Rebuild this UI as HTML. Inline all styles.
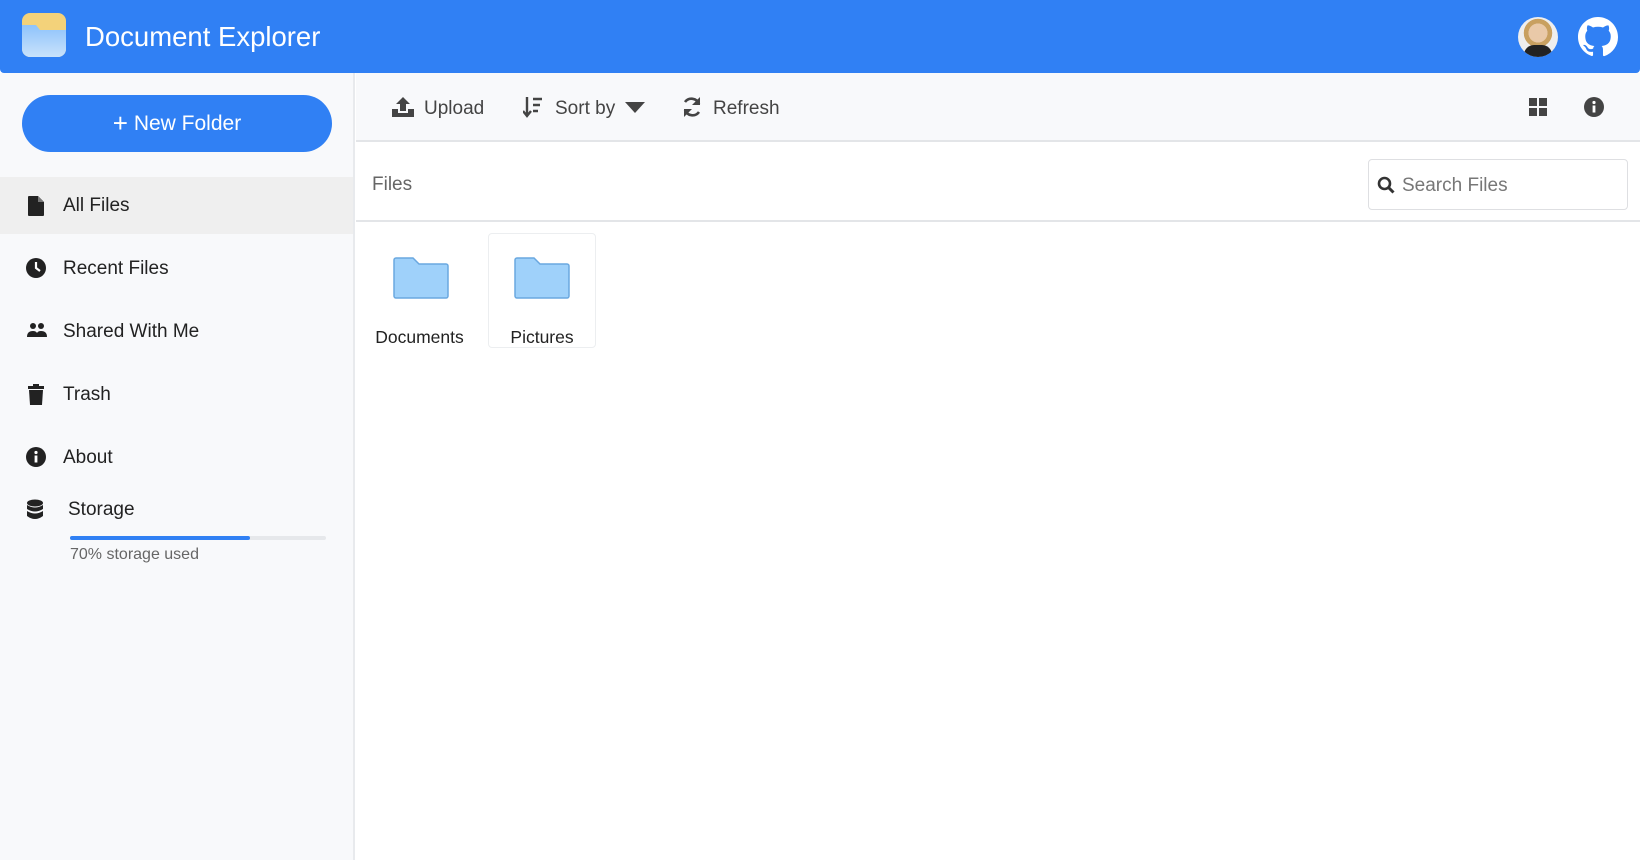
<!DOCTYPE html>
<html><head><meta charset="utf-8"><style>
*{box-sizing:border-box;margin:0;padding:0}
body{width:1640px;height:860px;overflow:hidden;background:#fff;font-family:"Liberation Sans",Arial,sans-serif;position:relative;color:#222}
.hdr{position:absolute;left:0;top:0;width:1640px;height:73px;background:#3080f4;border-radius:0 0 4px 4px}
.abs{position:absolute}
.side{position:absolute;left:0;top:73px;width:355px;height:787px;background:#f8f9fb;border-right:2px solid #e8eaed}
.btn{position:absolute;left:22px;top:95px;width:310px;height:57px;border-radius:29px;background:#3080f4;color:#fff;font-size:21px;text-align:center;line-height:57px}
.item{position:absolute;left:0;width:353px;height:57px;font-size:19px;line-height:57px}
.item span{position:absolute;left:63px}
.item svg{position:absolute;left:26px;top:18px}
.tb{position:absolute;left:356px;top:73px;width:1284px;height:69px;background:#f8f9fb;border-bottom:2px solid #e3e5e8;font-size:19px;color:#444}
.fh{position:absolute;left:356px;top:142px;width:1284px;height:80px;border-bottom:2px solid #e3e5e8}
.card{position:absolute;top:233px;height:115px;border-radius:4px;text-align:center;font-size:17.5px}
</style></head><body>
<div class="hdr">
 <svg class="abs" style="left:22px;top:13px" width="44" height="44" viewBox="0 0 44 44"><defs><linearGradient id="g" x1="0" y1="0" x2="0" y2="1"><stop offset="0" stop-color="#8ec3fb"/><stop offset="1" stop-color="#c9e2fb"/></linearGradient></defs><rect width="44" height="44" rx="8" fill="#f3d27a"/><path d="M0 12h14l4 5h26v19a8 8 0 0 1-8 8H8a8 8 0 0 1-8-8z" fill="url(#g)"/></svg>
 <div class="abs" style="left:85px;top:21px;color:#fff;font-size:27.5px">Document Explorer</div>
 <div class="abs" style="left:1518px;top:17px;width:40px;height:40px;border-radius:50%;background:radial-gradient(circle at 50% 40%,#e9c9a8 0 30%,#c8a060 31% 45%,#eee 46%);overflow:hidden"><div style="position:absolute;left:6px;top:28px;width:28px;height:14px;background:#222;border-radius:10px 10px 0 0"></div></div>
 <svg class="abs" style="left:1578px;top:17px" width="40" height="40" viewBox="0 0 16 16"><path fill="#fff" d="M8 0C3.58 0 0 3.58 0 8c0 3.540 2.29 6.530 5.470 7.590.4.07.55-.17.55-.38v-1.330c-2.230.48-2.700-1.070-2.700-1.070-.36-.92-.89-1.170-.89-1.170-.73-.5.06-.49.06-.49.8.06 1.230.83 1.230.83.72 1.230 1.870.87 2.330.67.07-.52.28-.87.5-1.070-1.780-.2-3.650-.89-3.650-3.950 0-.87.31-1.590.82-2.150-.08-.2-.36-1.020.08-2.120 0 0 .67-.21 2.200.82a7.600 7.600 0 0 1 4 0c1.530-1.040 2.200-.82 2.200-.82.44 1.100.16 1.920.08 2.120.51.56.82 1.270.82 2.150 0 3.070-1.870 3.750-3.650 3.950.29.25.54.73.54 1.480v2.200c0 .21.15.46.55.38A8.010 8.010 0 0 0 16 8c0-4.420-3.580-8-8-8z"/></svg>
</div>
<div class="side">
 <div class="btn"style="top:22px"><b style="font-weight:normal;font-size:26px;vertical-align:-2px">+</b> New Folder</div>
 <div class="item" style="top:104px;background:#efefef"><svg width="20" height="22" viewBox="0 0 20 22"><path d="M3 1h9l6 6v13a1 1 0 0 1-1 1H3a1 1 0 0 1-1-1V2a1 1 0 0 1 1-1z" fill="#222"/><path d="M12 1v6h6" fill="#777"/></svg><span>All Files</span></div>
 <div class="item" style="top:167px"><svg width="20" height="20" viewBox="0 0 20 20"><circle cx="10" cy="10" r="10" fill="#222"/><path d="M10 4v6l4 3" stroke="#fff" stroke-width="2.2" fill="none"/></svg><span>Recent Files</span></div>
 <div class="item" style="top:230px"><svg width="22" height="20" viewBox="0 0 22 20"><circle cx="7" cy="5" r="3" fill="#222"/><circle cx="15" cy="5" r="3" fill="#222"/><path d="M1 16q0-6 6-6 3 0 4 2 1-2 4-2 6 0 6 6z" fill="#222"/></svg><span>Shared With Me</span></div>
 <div class="item" style="top:293px"><svg width="20" height="22" viewBox="0 0 20 22"><rect x="2" y="2" width="16" height="3" fill="#222"/><rect x="7" y="0" width="6" height="3" fill="#222"/><path d="M3 6h14l-1 15H4z" fill="#222"/></svg><span>Trash</span></div>
 <div class="item" style="top:356px"><svg width="20" height="20" viewBox="0 0 20 20"><circle cx="10" cy="10" r="10" fill="#222"/><circle cx="10" cy="5.5" r="1.6" fill="#fff"/><rect x="8.6" y="8.5" width="2.8" height="7" fill="#fff"/></svg><span>About</span></div>
 <div class="item" style="top:408px"><svg width="18" height="21" viewBox="0 0 18 21"><ellipse cx="9" cy="4" rx="8" ry="3.5" fill="#222"/><path d="M1 6q8 5 16 0v4q-8 5-16 0zM1 12q8 5 16 0v5q-8 6-16 0z" fill="#222"/></svg><span style="left:68px">Storage</span></div>
 <div class="abs" style="left:70px;top:463px;width:256px;height:4px;background:#e6e8eb;border-radius:2px"><div style="width:180px;height:4px;background:#3080f4;border-radius:2px"></div></div>
 <div class="abs" style="left:70px;top:473px;font-size:16px;color:#666">70% storage used</div>
</div>
<div class="tb">
 <svg class="abs" style="left:36px;top:24px" width="22" height="20" viewBox="0 0 22 20"><path d="M11 0l7 7h-4v7H8V7H4z" fill="#444"/><path d="M0 12h6v4h10v-4h6v8H0z" fill="#444"/></svg>
 <div class="abs" style="left:68px;top:25px">Upload</div>
 <svg class="abs" style="left:167px;top:23px" width="20" height="22" viewBox="0 0 20 22"><path d="M4 1v17M0 15l4 5 4-5" stroke="#444" stroke-width="2.4" fill="none"/><path d="M10 3h9M10 9h7M10 15h5" stroke="#444" stroke-width="2.4"/></svg>
 <div class="abs" style="left:199px;top:25px">Sort by</div>
 <svg class="abs" style="left:269px;top:29px" width="20" height="11" viewBox="0 0 20 11"><path d="M0 0h20l-10 11z" fill="#444"/></svg>
 <svg class="abs" style="left:325px;top:23px" width="22" height="22" viewBox="0 0 22 22"><path d="M18 8A8 8 0 0 0 4 6M4 14a8 8 0 0 0 14 2" stroke="#444" stroke-width="2.6" fill="none"/><path d="M19 1v8h-8zM3 21v-8h8z" fill="#444"/></svg>
 <div class="abs" style="left:357px;top:25px">Refresh</div>
 <svg class="abs" style="left:1173px;top:25px" width="18" height="18" viewBox="0 0 18 18"><rect width="8" height="8" fill="#444"/><rect x="10" width="8" height="8" fill="#444"/><rect y="10" width="8" height="8" fill="#444"/><rect x="10" y="10" width="8" height="8" fill="#444"/></svg>
 <svg class="abs" style="left:1228px;top:24px" width="20" height="20" viewBox="0 0 20 20"><circle cx="10" cy="10" r="10" fill="#444"/><circle cx="10" cy="5.5" r="1.6" fill="#fff"/><rect x="8.6" y="8.5" width="2.8" height="7" fill="#fff"/></svg>
</div>
<div class="fh">
 <div class="abs" style="left:16px;top:32px;font-size:19px;color:#666">Files</div>
 <div class="abs" style="left:1012px;top:17px;width:260px;height:51px;border:1px solid #dedfe2;border-radius:4px;background:#fff">
  <svg class="abs" style="left:8px;top:16px" width="18" height="18" viewBox="0 0 18 18"><circle cx="7.5" cy="7.5" r="5.5" stroke="#333" stroke-width="2.6" fill="none"/><path d="M11.5 11.5l5 5" stroke="#333" stroke-width="3"/></svg>
  <div class="abs" style="left:33px;top:15px;font-size:19px;color:#777">Search Files</div>
 </div>
</div>
<div class="card" style="left:370px;width:117px">
 <svg class="abs" style="left:23px;top:24px" width="56" height="42" viewBox="0 0 56 42"><path d="M1 3a2 2 0 0 1 2-2h17l6 6h27a2 2 0 0 1 2 2v30a2 2 0 0 1-2 2H3a2 2 0 0 1-2-2z" fill="#9fd1fa" stroke="#6aa8e0" stroke-width="1.5"/></svg>
 <div class="abs" style="left:-9px;width:117px;top:94px">Documents</div>
</div>
<div class="card" style="left:488px;width:108px;border:1px solid #eceef0">
 <svg class="abs" style="left:25px;top:23px" width="56" height="42" viewBox="0 0 56 42"><path d="M1 3a2 2 0 0 1 2-2h17l6 6h27a2 2 0 0 1 2 2v30a2 2 0 0 1-2 2H3a2 2 0 0 1-2-2z" fill="#9fd1fa" stroke="#6aa8e0" stroke-width="1.5"/></svg>
 <div class="abs" style="left:0;width:106px;top:93px">Pictures</div>
</div>
</body></html>
